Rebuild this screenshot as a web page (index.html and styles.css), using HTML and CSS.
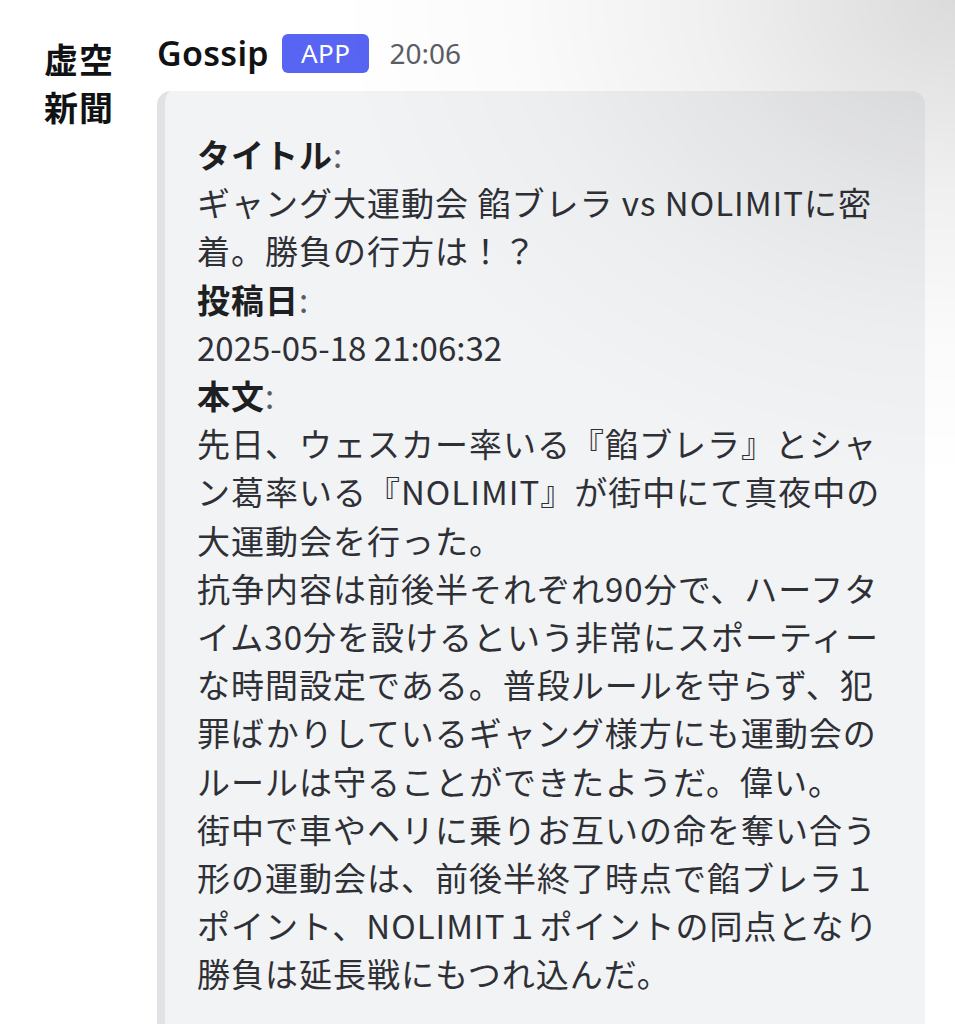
FILE: index.html
```html
<!DOCTYPE html>
<html lang="ja">
<head>
<meta charset="utf-8">
<title>Gossip</title>
<link rel="stylesheet" href="styles.css">
</head>
<body>
<div class="message">
  <div class="avatar">虚空<br>新聞</div>
  <div class="main">
    <div class="header">
      <span class="name">Gossip</span>
      <span class="badge">APP</span>
      <span class="time">20:06</span>
    </div>
    <div class="card">
      <div class="field"><b class="label">タイトル</b>:</div>
      <div class="value">ギャング大運動会 餡ブレラ vs NOLIMITに密<br>着。勝負の行方は！？</div>
      <div class="field"><b class="label">投稿日</b>:</div>
      <div class="value date">2025-05-18 21:06:32</div>
      <div class="field"><b class="label">本文</b>:</div>
      <div class="value">先日、ウェスカー率いる『餡ブレラ』とシャ<br>ン葛率いる『NOLIMIT』が街中にて真夜中の<br>大運動会を行った。<br>抗争内容は前後半それぞれ90分で、ハーフタ<br>イム30分を設けるという非常にスポーティー<br>な時間設定である。普段ルールを守らず、犯<br>罪ばかりしているギャング様方にも運動会の<br>ルールは守ることができたようだ。偉い。<br>街中で車やヘリに乗りお互いの命を奪い合う<br>形の運動会は、前後半終了時点で餡ブレラ１<br>ポイント、NOLIMIT１ポイントの同点となり<br>勝負は延長戦にもつれ込んだ。</div>
    </div>
  </div>
</div>
</body>
</html>
```

FILE: styles.css
```css
html, body {
  margin: 0;
  padding: 0;
  background: #ffffff;
}
body {
  font-family: "Noto Sans CJK JP", "Noto Sans", sans-serif;
  color: #2e3035;
  min-height: 1024px;
  overflow: hidden;
}
body::after {
  content: "";
  position: fixed;
  inset: 0;
  pointer-events: none;
  background: radial-gradient(ellipse 620px 480px at 100% 0, rgba(0,0,0,0.14) 0%, rgba(0,0,0,0.06) 40%, rgba(0,0,0,0.02) 70%, rgba(0,0,0,0) 100%);
}
.message {
  display: flex;
  gap: 44px;
  padding: 35px 30px 0 44px;
}
.avatar {
  width: 70px;
  flex: none;
  font-size: 34px;
  font-weight: 700;
  line-height: 48px;
  color: #111214;
  letter-spacing: 1px;
}
.main {
  flex: 1;
  margin-left: -1px;
}
.header {
  display: flex;
  align-items: center;
  gap: 13px;
  height: 40px;
  margin-top: -2px;
  font-family: "Noto Sans", "Noto Sans CJK JP", sans-serif;
}
.name {
  font-size: 34px;
  font-weight: 600;
  color: #111214;
  letter-spacing: 0.3px;
}
.badge {
  background: #5865f2;
  color: #ffffff;
  font-size: 26px;
  line-height: 39px;
  height: 39px;
  padding: 0 19px;
  border-radius: 6px;
  margin-right: 7px;
  letter-spacing: 0.5px;
}
.time {
  font-size: 28px;
  color: #5c5e66;
}
.card {
  margin-top: 18px;
  background: #f2f3f5;
  border-left: 8px solid #e1e2e5;
  border-radius: 14px 14px 0 0;
  padding: 39px 30px 60px 32px;
  font-size: 33px;
  letter-spacing: 1px;
  line-height: 48.2px;
}
.field {
  color: #5a5c63;
}
.label {
  font-weight: 700;
  color: #1e1f22;
}
.value {
  color: #2e3035;
}
.date {
  letter-spacing: 0;
}
```
